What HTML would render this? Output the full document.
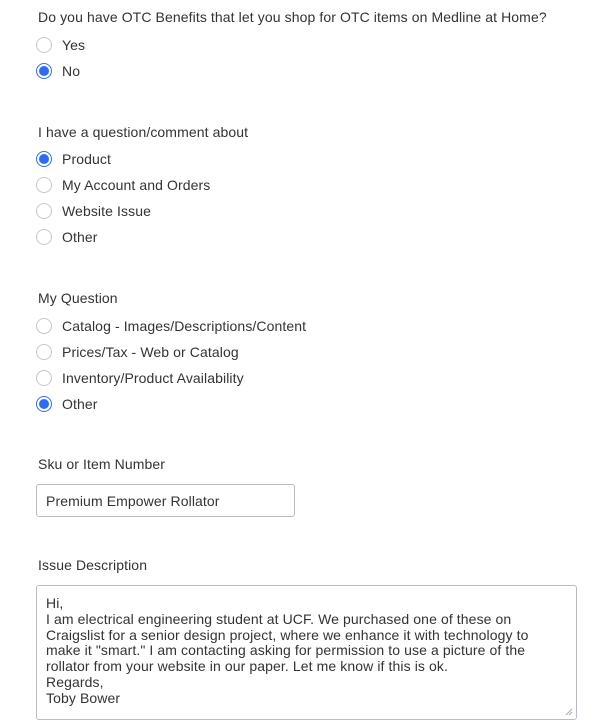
<!DOCTYPE html>
<html><head><style>
body{margin:0;width:593px;height:722px;background:#fff;font-family:"Liberation Sans",Arial,sans-serif;font-size:14px;letter-spacing:0.1px;color:#333;position:relative;overflow:hidden}
.t{position:absolute;left:38px;line-height:16px;white-space:nowrap}
.r{position:absolute;left:36px;width:14px;height:14px;border:1px solid #c4c7cc;border-radius:50%;box-sizing:content-box}
.r.on{border:1px solid #2f6cf6;width:14px;height:14px}
.r.on::after{content:"";position:absolute;left:2px;top:2px;width:10px;height:10px;border-radius:50%;background:#2f6cf6}
.l{position:absolute;left:62px;line-height:16px;white-space:nowrap}
.box{position:absolute;border:1px solid #b8bcc4;border-radius:3px;box-sizing:border-box}
</style></head><body>
<div class="t" style="top:9px">Do you have OTC Benefits that let you shop for OTC items on Medline at Home?</div>
<div class="r" style="top:37px"></div><div class="l" style="top:37px">Yes</div>
<div class="r on" style="top:63px"></div><div class="l" style="top:63px">No</div>

<div class="t" style="top:124px">I have a question/comment about</div>
<div class="r on" style="top:151px"></div><div class="l" style="top:151px">Product</div>
<div class="r" style="top:177px"></div><div class="l" style="top:177px">My Account and Orders</div>
<div class="r" style="top:203px"></div><div class="l" style="top:203px">Website Issue</div>
<div class="r" style="top:229px"></div><div class="l" style="top:229px">Other</div>

<div class="t" style="top:290px">My Question</div>
<div class="r" style="top:318px"></div><div class="l" style="top:318px">Catalog - Images/Descriptions/Content</div>
<div class="r" style="top:344px"></div><div class="l" style="top:344px">Prices/Tax - Web or Catalog</div>
<div class="r" style="top:370px"></div><div class="l" style="top:370px">Inventory/Product Availability</div>
<div class="r on" style="top:396px"></div><div class="l" style="top:396px">Other</div>

<div class="t" style="top:456px">Sku or Item Number</div>
<div class="box" style="left:36px;top:484px;width:259px;height:33px"><div style="position:absolute;left:9px;top:8px;line-height:16px">Premium Empower Rollator</div></div>

<div class="t" style="top:557px">Issue Description</div>
<div class="box" style="left:36px;top:585px;width:541px;height:135px"><div style="position:absolute;left:9px;top:10px;line-height:15.8px;white-space:nowrap">Hi,<br>I am electrical engineering student at UCF. We purchased one of these on<br>Craigslist for a senior design project, where we enhance it with technology to<br>make it "smart." I am contacting asking for permission to use a picture of the<br>rollator from your website in our paper. Let me know if this is ok.<br>Regards,<br>Toby Bower</div>
<svg style="position:absolute;right:3px;bottom:3px" width="8" height="8"><path d="M1 7L7 1M4 7L7 4" stroke="#aaa" stroke-width="1"/></svg></div>
</body></html>
